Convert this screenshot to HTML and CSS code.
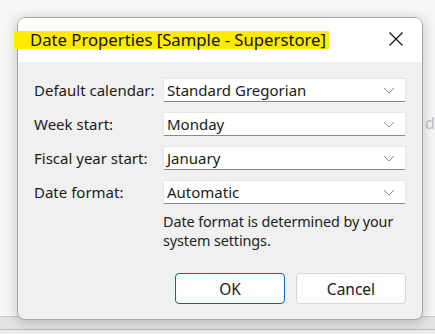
FILE: index.html
```html
<!DOCTYPE html>
<html lang="en">
<head>
  <meta charset="UTF-8">
  <title>Date Properties</title>
  <link rel="stylesheet" href="styles.css">
</head>
<body>

  <span class="fondo-letra">d</span>

  <div class="dialogo">
    <div class="titulo">
      <span class="marcado">Date Properties [Sample - Superstore]</span>
      <svg class="cerrar" width="16" height="16" viewBox="0 0 16 16">
        <path d="M1.5 1.5 L14.5 14.5 M14.5 1.5 L1.5 14.5" stroke="#1a1a1a" stroke-width="1.3" fill="none"/>
      </svg>
    </div>

    <div class="cuerpo">
      <div class="form">
        <label>Default calendar:</label>
        <div class="combo"><span>Standard Gregorian</span><svg width="12" height="7" viewBox="0 0 12 7"><path d="M1 1 L6 6 L11 1" stroke="#8a8a8a" fill="none"/></svg></div>

        <label>Week start:</label>
        <div class="combo"><span>Monday</span><svg width="12" height="7" viewBox="0 0 12 7"><path d="M1 1 L6 6 L11 1" stroke="#8a8a8a" fill="none"/></svg></div>

        <label>Fiscal year start:</label>
        <div class="combo"><span>January</span><svg width="12" height="7" viewBox="0 0 12 7"><path d="M1 1 L6 6 L11 1" stroke="#8a8a8a" fill="none"/></svg></div>

        <label>Date format:</label>
        <div class="combo"><span>Automatic</span><svg width="12" height="7" viewBox="0 0 12 7"><path d="M1 1 L6 6 L11 1" stroke="#8a8a8a" fill="none"/></svg></div>
      </div>

      <p class="nota">Date format is determined by your system settings.</p>

      <div class="botones">
        <button class="ok">OK</button>
        <button>Cancel</button>
      </div>
    </div>
  </div>

</body>
</html>
```

FILE: styles.css
```css
body {
  margin: 0;
  width: 435px;
  height: 334px;
  overflow: hidden;
  position: relative;
  font-family: 'Noto Sans', 'Liberation Sans', sans-serif;
  color: #1a1a1a;
  background:
    linear-gradient(to bottom, transparent 316px, #c9c9c9 316px, #c9c9c9 317px, #e4e4e4 317px, #e4e4e4 329px, #b9b9b9 329px, #b9b9b9 330px, #ececec 330px),
    #f7f7f7;
  padding: 17px 0 0 17px;
  box-sizing: border-box;
}

.fondo-letra {
  position: absolute;
  left: 425px;
  top: 112px;
  font-size: 16px;
  color: #c2c2c2;
}

.dialogo {
  position: relative;
  width: 406px;
  height: 303px;
  box-sizing: border-box;
  border: 1px solid #a6a6a6;
  border-radius: 8px;
  background-color: #f0f0f0;
  box-shadow: 0 2px 14px rgba(0, 0, 0, 0.22);
  display: flex;
  flex-direction: column;
}

.titulo {
  height: 44px;
  background-color: #ffffff;
  border-radius: 7px 7px 0 0;
  display: flex;
  align-items: center;
  justify-content: space-between;
  padding: 0 18px 0 0;
}

.marcado {
  background-color: #ffea00;
  margin-left: -4px;
  padding: 0 3px 0 16px;
  height: 18px;
  line-height: 18px;
  font-size: 16.7px;
  color: #111;
}

.cerrar {
  margin-top: -2px;
}

.cuerpo {
  padding: 16px 16px 0 16px;
  font-size: 15px;
}

.form {
  display: grid;
  grid-template-columns: 129px 1fr;
  row-gap: 10px;
  align-items: center;
}

.form label {
  line-height: 24px;
}

.combo {
  height: 24px;
  box-sizing: border-box;
  background-color: #ffffff;
  border: 1px solid #e6e6e6;
  border-bottom-color: #8a8a8a;
  border-radius: 2px;
  display: flex;
  align-items: center;
  justify-content: space-between;
  padding: 0 10px 0 3px;
}

.nota {
  margin: 8px 0 0 129px;
  line-height: 19px;
  font-size: 14.4px;
  letter-spacing: -0.1px;
  color: #222;
}

.botones {
  display: flex;
  justify-content: flex-end;
  gap: 11px;
  margin-top: 23px;
}

button {
  width: 110px;
  height: 31px;
  font-family: inherit;
  font-size: 15.5px;
  color: #1a1a1a;
  background-color: #fdfdfd;
  border: 1px solid #d6d6d6;
  border-radius: 4px;
}

button.ok {
  border-color: #0067c0;
}
```
